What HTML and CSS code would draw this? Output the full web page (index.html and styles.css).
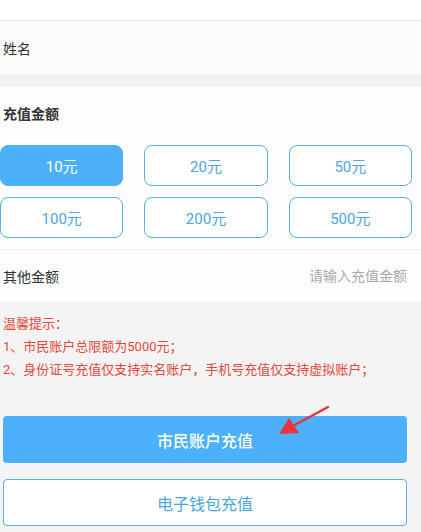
FILE: index.html
```html
<!DOCTYPE html>
<html lang="zh-CN">
<head>
  <meta charset="UTF-8" />
  <meta name="viewport" content="width=device-width, initial-scale=1.0"/>
  <title>充值</title>
  <link rel="stylesheet" href="styles.css">
</head>
<body>
  <div class="top"></div>

  <div class="row name-row">姓名</div>

  <div class="spacer"></div>

  <div class="section">
    <h3>充值金额</h3>
    <div class="amounts">
      <button class="amt active">10元</button>
      <button class="amt">20元</button>
      <button class="amt">50元</button>
      <button class="amt">100元</button>
      <button class="amt">200元</button>
      <button class="amt">500元</button>
    </div>
  </div>

  <div class="row other-row">
    <span>其他金额</span>
    <input type="text" placeholder="请输入充值金额"/>
  </div>

  <div class="bottom">
    <div class="tips">
      <p>温馨提示：</p>
      <p>1、市民账户总限额为5000元；</p>
      <p>2、身份证号充值仅支持实名账户，手机号充值仅支持虚拟账户；</p>
    </div>

    <div class="actions">
      <button class="btn primary">市民账户充值</button>
      <button class="btn ghost">电子钱包充值</button>
      <svg class="arrow" width="60" height="40" viewBox="0 0 60 40">
        <line x1="57" y1="4" x2="20" y2="24" stroke="#e8343a" stroke-width="2.5" stroke-linecap="round"/>
        <polygon points="8,31 18,15 28,30" fill="#e8343a"/>
      </svg>
    </div>
  </div>
</body>
</html>
```

FILE: styles.css
```css
body { margin: 0; font-family: Roboto, "Noto Sans CJK SC", sans-serif; color: #333; background: #f4f4f4; }
.top { height: 20px; background: #fff; border-bottom: 1px solid #ededed; }
.row { display: flex; align-items: center; justify-content: space-between; padding: 0 14px 0 3px; font-size: 14px; background: #fcfcfc; }
.name-row { height: 53px; }
.spacer { height: 13px; background: #f3f3f3; }
.section { background: #fdfdfd; padding: 17px 9px 11px 0; border-bottom: 1px solid #ededed; }
.section h3 { margin: 0 0 21px 3px; font-size: 14px; line-height: 20px; font-weight: bold; }
.amounts { display: grid; grid-template-columns: repeat(3, 1fr); column-gap: 21px; row-gap: 11px; }
.amt { height: 41px; border: 1.5px solid #5eaee2; border-radius: 8px; background: #fff; color: #4ca6e0; font-family: inherit; font-size: 15px; padding: 0; }
.amt.active { background: #4db1fa; border-color: #4db1fa; color: #fff; }
.other-row { height: 52px; background: #fdfdfd; }
.other-row input { border: none; background: transparent; text-align: right; font-family: inherit; font-size: 14px; width: 140px; padding: 0; outline: none; }
.other-row input::placeholder { color: #aaa; }
.bottom { padding: 10px 14px 6px 3px; }
.tips { color: #e2473b; font-size: 13px; }
.tips p { margin: 0; line-height: 23px; }
.actions { position: relative; margin-top: 35px; display: flex; flex-direction: column; gap: 16px; }
.btn { height: 47px; border-radius: 4px; font-family: inherit; font-size: 16px; font-weight: 500; padding: 0; }
.primary { background: #4cb0fa; border: none; color: #fff; }
.ghost { background: #fff; border: 1px solid #5eaee2; color: #4ca6e0; font-weight: normal; }
.arrow { position: absolute; left: 268px; top: -13px; }
```
